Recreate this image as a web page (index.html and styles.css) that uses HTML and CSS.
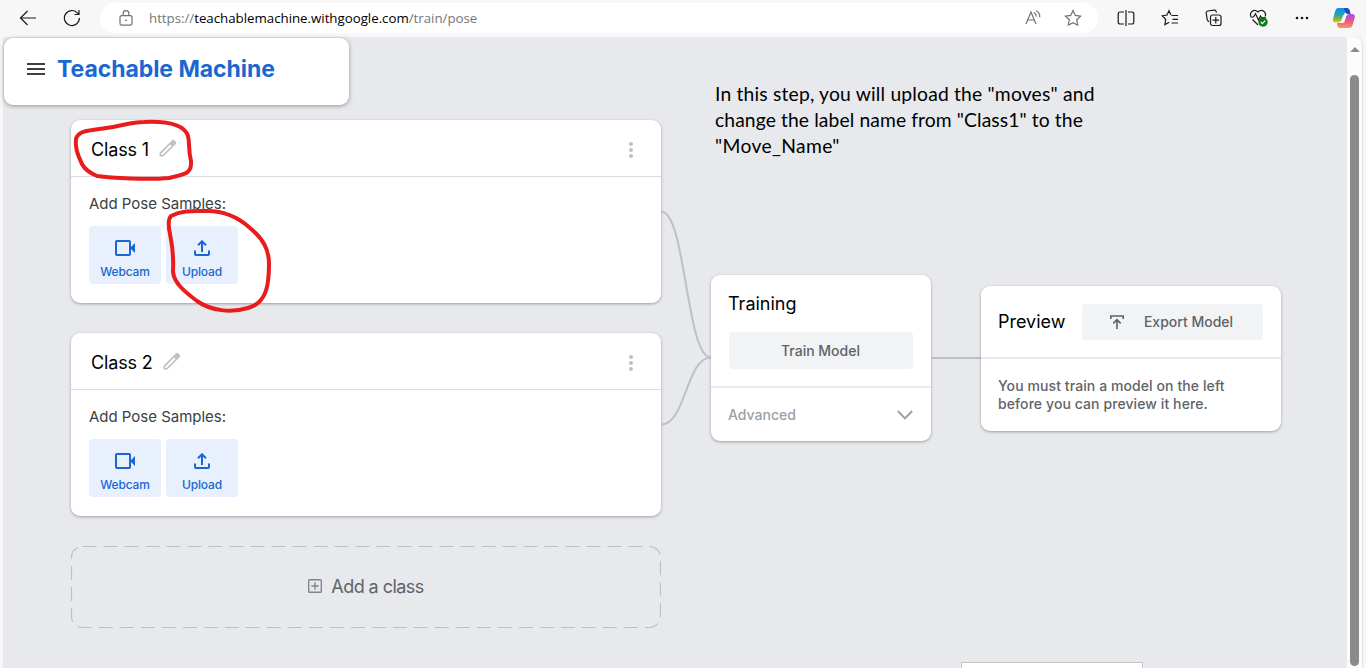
FILE: index.html
```html
<!DOCTYPE html>
<html lang="en">
<head>
<meta charset="utf-8">
<title>Teachable Machine</title>
<link rel="stylesheet" href="styles.css">
</head>
<body>
<svg class="defs" width="0" height="0">
  <defs>
    <symbol id="pencil" viewBox="0 0 20 20"><path fill-rule="evenodd" d="M1.500 14.800 13.800 2.400q1.200-1.200 2.500-.2l1.500 1.500q1 1.300-.1 2.500L5.300 18.600H1.500zM3.200 15.400v1.500h1.400l9-9-1.500-1.500z"/></symbol>
    <symbol id="camera" viewBox="0 0 20 16"><rect x="1" y="1" width="14" height="14" rx=".8" fill="none" stroke="currentColor" stroke-width="2"/><path d="m15 8 5-5v10z"/></symbol>
    <symbol id="upload" viewBox="0 0 16 16"><path d="M1 10.500V14q0 1 1 1h12q1 0 1-1v-3.500M8 12V1.500M4 5.300l4-4 4 4" fill="none" stroke="currentColor" stroke-width="2"/></symbol>
  </defs>
</svg>

<header class="toolbar">
  <svg class="back" width="18" height="16" viewBox="0 0 18 16"><path d="M17 8H1.500M8.500 1 1.500 8l7 7"/></svg>
  <svg class="reload" width="18" height="18" viewBox="0 0 18 18"><path d="M16.400 9A7.500 7.500 0 1 1 14.300 3.800L16 5.500M16 1v4.500h-4.500"/></svg>
  <div class="address">
    <svg class="lock" width="14" height="16" viewBox="0 0 14 16"><path d="M2.700 5.600h8.600a1.700 1.700 0 0 1 1.700 1.700v6.200a1.700 1.700 0 0 1-1.700 1.700H2.700A1.700 1.700 0 0 1 1 13.500V7.300a1.700 1.700 0 0 1 1.700-1.700zM4.200 5.500V3.500a2.800 2.800 0 0 1 5.600 0v2"/><circle cx="7" cy="10.300" r=".9"/></svg>
    <div class="url">https://<b>teachablemachine.withgoogle.com</b>/train/pose</div>
    <svg class="read" width="16" height="16" viewBox="0 0 16 16"><path d="m1 14 5-12 5 12M2.700 10h6.600M9 2.500q2.300 1.200 2.300 4M11 .7q4 1.800 3.800 6.500"/></svg>
    <svg class="star" width="18" height="18" viewBox="0 0 18 18"><path d="m9 1.500 2.300 4.900 5.300.700-3.900 3.700 1 5.400L9 13.600l-4.700 2.600 1-5.400L1.400 7.100l5.300-.7z"/></svg>
  </div>
  <div class="actions">
    <svg width="18" height="18" viewBox="0 0 18 18"><path d="M7 3H3a1.800 1.800 0 0 0-1.800 1.800v8.400A1.800 1.800 0 0 0 3 15h4M11 3h4a1.800 1.800 0 0 1 1.800 1.800v8.400A1.800 1.800 0 0 1 15 15h-4M9 1v16"/></svg>
    <svg width="18" height="18" viewBox="0 0 18 18"><path d="M10.500 6.500H17M10 6 8 1.700 6 6 1.200 6.800l3.500 3.500-.8 5.300 4.300-2.400M11.500 10.300H17M10.500 14H17"/></svg>
    <svg width="18" height="18" viewBox="0 0 18 18"><path d="M7.500 6H14a2 2 0 0 1 2 2v6.500a2 2 0 0 1-2 2H7.500a2 2 0 0 1-2-2V8a2 2 0 0 1 2-2zM10.800 8v6.500M7.500 11.200H14M3.800 12.800 2.300 11 1.200 4.200a2 2 0 0 1 1.600-2.200L9 1.200a2 2 0 0 1 2.200 1.500l.3 1"/></svg>
    <svg width="20" height="18" viewBox="0 0 20 18"><path d="M2 7.500C0 3.500 5-1 9 3c4-4 9 .5 7 4.500M1.500 8h3l2-3.300L9.500 11l2-4 1 1.500h4M3.500 10.500 9 16"/><circle class="ok" cx="14" cy="13" r="4.700"/><path class="tick" d="m11.800 13 1.600 1.700 2.800-3"/></svg>
    <svg class="dots" width="18" height="18" viewBox="0 0 18 18"><circle cx="4" cy="9" r="1.300"/><circle cx="9" cy="9" r="1.300"/><circle cx="14" cy="9" r="1.300"/></svg>
  </div>
  <svg class="copilot" width="24" height="22" viewBox="0 0 24 22">
    <defs>
      <linearGradient id="cool" x1="0" y1="0" x2="0" y2="1"><stop offset="0" stop-color="#2187e8"/><stop offset=".45" stop-color="#18a7b5"/><stop offset=".75" stop-color="#82b63b"/><stop offset="1" stop-color="#f3c51c"/></linearGradient>
      <linearGradient id="warm" x1="0" y1="0" x2="0" y2="1"><stop offset="0" stop-color="#a255e3"/><stop offset=".5" stop-color="#e85391"/><stop offset="1" stop-color="#ff9a55"/></linearGradient>
    </defs>
    <path fill="url(#warm)" d="M17 7h3q3.500 0 2.800 3.500l-2 7Q20 21 17 21H8q-2 0-2.600-2L5 16h5q2 0 2.600-2l1.500-5q.6-2 2.900-2z"/>
    <path fill="url(#cool)" d="M6 1h10L11 9q-1 2-1.600 4-.8 2.500-3 2.500H3.500Q.2 15.500 1 12l2.200-8Q4 1 6 1z"/>
    <path fill="#1b4cc4" d="M12 1h2.500Q17 1 17.600 3l1 4H16q-2 0-3-2z"/>
    <path fill="#f7f7f7" d="M13.500 7H17q-2.200.2-2.900 2.200l-1.500 5Q12 16 10 16H7.500q1.700-.5 2.400-2.800l1.500-4Q12 7 13.500 7z"/>
  </svg>
</header>

<div class="viewport">
  <main class="page">
    <div class="pipeline">
      <div class="classes">
        <section class="card class-card">
          <div class="class-head"><span class="class-name">Class 1</span><svg class="pencil" width="20" height="20"><use href="#pencil"/></svg><svg class="more" width="4" height="16" viewBox="0 0 4 16"><circle cx="2" cy="2" r="2"/><circle cx="2" cy="8" r="2"/><circle cx="2" cy="14" r="2"/></svg></div>
          <div class="samples">
            <div class="samples-label">Add Pose Samples:</div>
            <div class="sources">
              <div class="source"><svg width="20" height="16"><use href="#camera"/></svg><span>Webcam</span></div>
              <div class="source"><svg width="16" height="16"><use href="#upload"/></svg><span>Upload</span></div>
            </div>
          </div>
        </section>
        <section class="card class-card">
          <div class="class-head"><span class="class-name">Class 2</span><svg class="pencil" width="20" height="20"><use href="#pencil"/></svg><svg class="more" width="4" height="16" viewBox="0 0 4 16"><circle cx="2" cy="2" r="2"/><circle cx="2" cy="8" r="2"/><circle cx="2" cy="14" r="2"/></svg></div>
          <div class="samples">
            <div class="samples-label">Add Pose Samples:</div>
            <div class="sources">
              <div class="source"><svg width="20" height="16"><use href="#camera"/></svg><span>Webcam</span></div>
              <div class="source"><svg width="16" height="16"><use href="#upload"/></svg><span>Upload</span></div>
            </div>
          </div>
        </section>
        <div class="add-class">
          <svg class="add-outline" width="590" height="83" viewBox="0 0 590 83"><rect x=".5" y=".5" width="589" height="81" rx="11"/></svg>
          <svg class="plus" width="14" height="14" viewBox="0 0 14 14"><path d="M1.500.7h11a.8.8 0 0 1 .8.8v11a.8.8 0 0 1-.8.8h-11a.8.8 0 0 1-.8-.8v-11a.8.8 0 0 1 .8-.8zM7 3.300v7.400M3.300 7h7.400"/></svg>
          <span>Add a class</span>
        </div>
      </div>
      <svg class="wires" width="50" height="230" viewBox="0 0 50 230"><path d="M0 11.500c25 0 25 146 50 146M0 224.500c25 0 25-67 50-67"/></svg>
      <section class="card training">
        <div class="training-main">
          <h2>Training</h2>
          <div class="btn train-btn">Train Model</div>
        </div>
        <div class="advanced"><span>Advanced</span><svg width="16" height="10" viewBox="0 0 16 10"><path d="m.8 1 7.200 7.400L15.200 1"/></svg></div>
      </section>
      <div class="link"></div>
      <section class="card preview">
        <div class="preview-head"><h2>Preview</h2><div class="btn export-btn"><svg width="14" height="14" viewBox="0 0 14 14"><path d="M.8 4V1h12.400v3M7 14V5M3.300 8.400 7 4.700l3.700 3.700"/></svg><span>Export Model</span></div></div>
        <p>You must train a model on the left<br>before you can preview it here.</p>
      </section>
    </div>
    <div class="brand"><div class="burger"><i></i><i></i><i></i></div><span>Teachable Machine</span></div>
    <div class="note"><div class="n1">In this step, you will upload the "moves" and</div><div class="n2">change the label name from "Class1" to the</div><div class="n3">"Move_Name"</div></div>
    <div class="popup"></div>
    <svg class="ink" width="220" height="210" viewBox="65 115 220 210">
      <path d="M97 176C90 173 85 170 82 164C77 154 75 145 76 139C78 130 93 130 106 128C123 126 130 122 144 122C166 121 184 124 188 136C190 144 188 149 191 161C192 174 185 174 169 178C148 180 111 178 97 176"/>
      <path d="M171 216C182 210 194 211 207 211C224 211 237 216 250 228C263 239 269 249 269 264C269 284 267 303 248 308C231 313 211 311 197 301C185 292 174 283 173 272C174 252 172 246 170 234Q167 220 171 216"/>
    </svg>
  </main>
  <div class="scrollbar"><div class="arrow"></div><div class="thumb"></div></div>
</div>
</body>
</html>
```
FILE: styles.css
```css
* { box-sizing: border-box; }
body { margin: 0; width: 1366px; height: 668px; overflow: hidden; background: #f7f7f7; font-family: Inter, sans-serif; color: #000; }
svg { display: block; flex: none; }
.defs { position: absolute; }

.toolbar { height: 36px; display: flex; align-items: center; padding-left: 19px; }
.toolbar svg { fill: none; stroke: #1b1b1b; stroke-width: 1.2; }
.reload { margin-left: 26px; }
.address { width: 998px; height: 30px; margin-left: 19px; padding: 0 16px 0 19px; border-radius: 15px; background: #fff; display: flex; align-items: center; }
.toolbar .address svg { stroke: #707070; }
.toolbar .address .lock circle { fill: #707070; stroke: none; }
.url { flex: 1; margin-left: 16px; font: 13.3px/20px "Open Sans", sans-serif; letter-spacing: -0.02px; color: #767676; white-space: nowrap; }
.url b { font-weight: 400; color: #000; }
.star { margin-left: 23px; }
.actions { display: flex; gap: 26px; margin-left: 19px; }
.toolbar .actions .dots { margin-left: -2px; fill: #111; stroke: none; }
.toolbar .actions .ok { fill: #0f7b18; stroke: none; }
.toolbar .actions .tick { stroke: #fff; }
.toolbar .copilot { margin-left: 21px; }
.toolbar .copilot path { stroke: none; }

.viewport { display: flex; height: 632px; padding: 1px 4px 0 3px; }
.page { width: 1344px; height: 631px; background: #e8e9ed; position: relative; }
.pipeline { display: flex; align-items: flex-start; padding: 83px 0 0 68px; }
.card { background: #fff; border-radius: 9px; box-shadow: 0 1px 3px rgba(60,64,67,.45); }
.classes { width: 590px; }
.class-card { height: 183px; margin-bottom: 30px; }
.class-head { height: 57px; display: flex; align-items: center; padding: 3px 28px 0 20px; border-bottom: 1px solid #dadce0; }
.class-name { font-size: 18px; letter-spacing: -0.15px; }
.pencil { margin-left: 9px; margin-top: -4px; fill: #bdc1c6; }
.more { margin-left: auto; fill: #bdc1c6; }
.samples { padding: 17px 18px; }
.samples-label { font-size: 15px; line-height: 20px; letter-spacing: -0.02px; color: #3c4043; white-space: nowrap; }
.sources { display: flex; gap: 5px; margin-top: 12px; }
.source { width: 72px; height: 58px; border-radius: 4px; background: #e8f0fe; color: #1967d2; fill: #1967d2; display: flex; flex-direction: column; align-items: center; padding-top: 14px; font-size: 12px; font-weight: 500; line-height: 16px; letter-spacing: -0.15px; }
.source span { margin-top: 8px; }
.add-class { position: relative; height: 83px; padding-bottom: 2px; display: flex; justify-content: center; align-items: center; gap: 9px; font-size: 18px; letter-spacing: -0.55px; color: #5f6368; }
.add-outline { position: absolute; inset: 0; fill: none; stroke: #bdc1c6; stroke-width: 1.2; stroke-dasharray: 14 7; }
.plus { margin-top: -1px; fill: none; stroke: #80868b; stroke-width: 1.4; }
.wires { margin-top: 80px; fill: none; stroke: #bdc1c6; stroke-width: 2; }
h2 { margin: 0 0 0 -1px; font-size: 18px; font-weight: 400; line-height: 24px; letter-spacing: 0; }
.btn { background: #f1f3f4; border-radius: 4px; color: #5f6368; font-size: 14px; font-weight: 500; display: flex; align-items: center; justify-content: center; }
.training { width: 220px; height: 166px; margin-top: 155px; }
.training-main { height: 113px; padding: 17px 18px; border-bottom: 2px solid #e8eaed; }
.train-btn { height: 37px; margin-top: 16px; padding-right: 1px; }
.advanced { height: 53px; padding: 0 18px 0 17px; display: flex; justify-content: space-between; align-items: center; font-size: 14px; font-weight: 500; color: #9aa0a6; }
.advanced svg { fill: none; stroke: #9aa0a6; stroke-width: 2; }
.link { width: 50px; height: 2px; margin-top: 237px; background: #bdc1c6; }
.preview { width: 300px; height: 145px; margin-top: 166px; }
.preview-head { height: 73px; display: flex; justify-content: space-between; align-items: center; padding: 0 18px; border-bottom: 2px solid #e8eaed; }
.export-btn { width: 181px; height: 36px; gap: 20px; padding-right: 2px; }
.export-btn svg { fill: none; stroke: #5f6368; stroke-width: 1.6; }
.preview p { margin: 18px 17px; font-size: 14px; font-weight: 500; line-height: 18px; color: #5f6368; white-space: nowrap; letter-spacing: 0.09px; }

.brand { position: absolute; left: 1px; top: 1px; width: 345px; height: 67px; display: flex; align-items: center; padding: 0 0 6px 23px; border-radius: 9px; background: #fff; box-shadow: 0 1px 4px rgba(60,64,67,.5); color: #1967d2; font-size: 23px; font-weight: 700; letter-spacing: -0.05px; white-space: nowrap; }
.burger { width: 18px; margin-right: 12px; display: grid; gap: 3px; }
.burger i { height: 2px; background: #3c4043; }
.note { position: absolute; left: 712px; top: 44px; font: 19.3px/26px Lato, sans-serif; white-space: nowrap; }
.n1 { letter-spacing: 0.18px; }
.n2 { letter-spacing: 0.1px; }
.n3 { letter-spacing: 0.35px; }
.popup { position: absolute; left: 958px; bottom: 0; width: 182px; height: 6px; background: #fff; border: 1px solid #c3c3c3; border-bottom: 0; }
.ink { position: absolute; left: 62px; top: 78px; fill: none; stroke: #e81c1c; stroke-width: 4; stroke-linecap: round; stroke-linejoin: round; }
.scrollbar { width: 15px; background: #fcfcfc; border-radius: 0 7px 0 0; display: flex; flex-direction: column; align-items: center; box-shadow: 1px 0 1px #e2e2e2; }
.arrow { margin-top: 10px; border: 5px solid transparent; border-top: 0; border-bottom: 5px solid #8b8b8b; }
.thumb { width: 9px; height: 591px; margin-top: 23px; border-radius: 5px; background: #8b8b8b; }
```
